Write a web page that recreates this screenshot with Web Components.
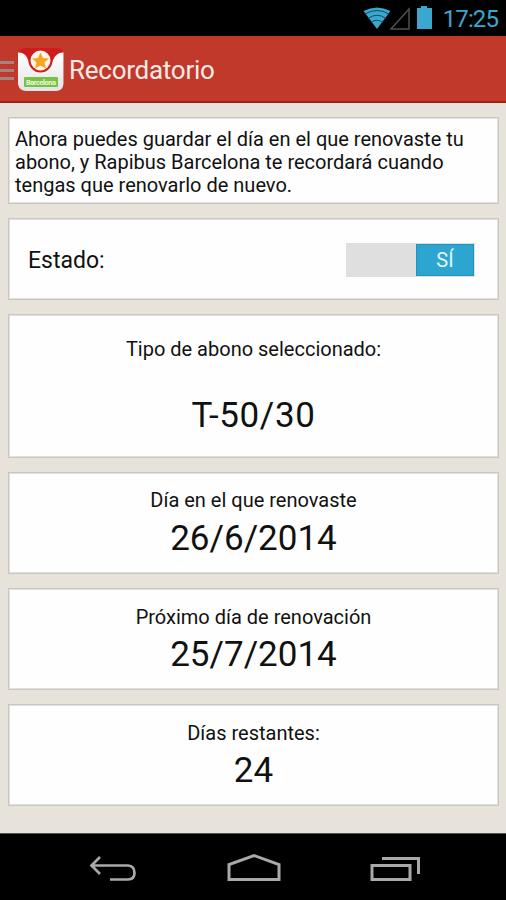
<!DOCTYPE html>
<html lang="es">
<head>
<meta charset="UTF-8">
<meta name="viewport" content="width=device-width, initial-scale=1.0">
<title>Recordatorio</title>
<style>
  body {
    margin: 0;
    height: 900px;
    overflow: hidden;
    display: flex;
    flex-direction: column;
    background: #e7e3da;
    color: #111;
    font-family: Roboto, "Liberation Sans", sans-serif;
  }

  main {
    flex: 1;
    display: flex;
    flex-direction: column;
    gap: 14px;
    padding: 14px 7px 0 8px;
  }
</style>
</head>
<body>
  <status-bar>17:25</status-bar>
  <action-bar>Recordatorio</action-bar>
  <main>
    <info-card style="height: 87px">
      <card-note>Ahora puedes guardar el día en el que renovaste tu abono, y Rapibus Barcelona te recordará cuando tengas que renovarlo de nuevo.</card-note>
    </info-card>
    <info-card style="height: 82px">
      <toggle-row label="Estado:">SÍ</toggle-row>
    </info-card>
    <info-card style="height: 144px">
      <data-field label="Tipo de abono seleccionado:" style="--top: 21px; --gap: 31px; --spacing: 0.6px">T-50/30</data-field>
    </info-card>
    <info-card style="height: 102px">
      <data-field label="Día en el que renovaste" style="--top: 14px; --gap: 3px">26/6/2014</data-field>
    </info-card>
    <info-card style="height: 102px">
      <data-field label="Próximo día de renovación">25/7/2014</data-field>
    </info-card>
    <info-card style="height: 102px">
      <data-field label="Días restantes:">24</data-field>
    </info-card>
  </main>
  <nav-bar></nav-bar>

<script>
class StatusBar extends HTMLElement {
  connectedCallback() {
    this.attachShadow({ mode: 'open' });
    this.shadowRoot.innerHTML = `
      <style>
        :host {
          display: flex;
          justify-content: flex-end;
          height: 36px;
          padding-right: 8px;
          box-sizing: border-box;
          background: #000;
          color: #3aa7cf;
          font-size: 24px;
          letter-spacing: -0.9px;
          line-height: 38px;
        }

        svg {
          margin-right: 8px;
        }
      </style>
      <svg width="72" height="36" viewBox="0 0 72 36">
        <path d="M0.500 11Q14 4 27.500 11L14 29Z" fill="#3aa7cf"/>
        <path d="M2 14Q14 7 26 14M5 18.500Q14 12 23 18.500M8 22.500Q14 18 20 22.500" fill="none" stroke="#14485c" stroke-width="1"/>
        <path d="M46 9V29H28Z" fill="none" stroke="#505050" stroke-width="1.500"/>
        <path d="M58 8V6H64V8H69V29H54V8Z" fill="#3aa7cf"/>
      </svg>
      <slot></slot>
    `;
  }
}

class ActionBar extends HTMLElement {
  connectedCallback() {
    this.attachShadow({ mode: 'open' });
    this.shadowRoot.innerHTML = `
      <style>
        :host {
          display: flex;
          align-items: center;
          height: 67px;
          padding-top: 3px;
          box-sizing: border-box;
          border-bottom: 2px solid #a71c13;
          background: #c0392b;
          color: #fbe9e6;
          font-size: 26px;
          letter-spacing: -0.25px;
        }

        .drawer {
          display: grid;
          gap: 5px;
          width: 14px;
          margin-right: 4px;
        }

        .drawer i {
          height: 3px;
          background: #a5837f;
        }

        svg {
          margin-right: 5px;
        }
      </style>
      <div class="drawer"><i></i><i></i><i></i></div>
      <svg width="46" height="46" viewBox="0 0 46 46">
        <defs>
          <linearGradient id="paper" x2="0" y2="1">
            <stop offset="0" stop-color="#fff"/>
            <stop offset="1" stop-color="#e3e3e3"/>
          </linearGradient>
        </defs>
        <rect y="1" width="46" height="43" rx="7" fill="#cf1c1c"/>
        <path d="M0 5.500Q8 5 10.500 14A12.500 12.500 0 0 0 34.500 14Q38 5 45.500 5.500V37Q45 44 38 44H8Q1 44 0 37Z" fill="url(#paper)"/>
        <circle cx="22.500" cy="13.500" r="11" fill="#fff4e9" stroke="#cf1c1c" stroke-width="2"/>
        <path d="M22.500 5.500L25 11L31 11.500L26.500 15.500L28 21.500L22.500 18.500L17 21.500L18.500 15.500L14 11.500L20 11Z" fill="#f8a51f"/>
        <rect x="6" y="30" width="34" height="10" rx="1" fill="#79c142"/>
        <text x="23" y="38" text-anchor="middle" textLength="30" font-size="7.500" font-weight="700" letter-spacing="0" fill="#e9f8de">Barcelona</text>
      </svg>
      <slot></slot>
    `;
  }
}

class InfoCard extends HTMLElement {
  connectedCallback() {
    this.attachShadow({ mode: 'open' });
    this.shadowRoot.innerHTML = `
      <style>
        :host {
          display: block;
          padding: 1px;
          box-sizing: border-box;
          border: 1px solid #c9c7c3;
          background: #fefefe;
          box-shadow: inset 0 0 0 1px #e2e1df;
        }
      </style>
      <slot></slot>
    `;
  }
}

class CardNote extends HTMLElement {
  connectedCallback() {
    this.attachShadow({ mode: 'open' });
    this.shadowRoot.innerHTML = `
      <style>
        :host {
          display: block;
          padding: 9px 20px 0 5px;
          font-size: 20px;
          line-height: 23px;
        }
      </style>
      <slot></slot>
    `;
  }
}

class ToggleRow extends HTMLElement {
  connectedCallback() {
    this.attachShadow({ mode: 'open' });
    this.shadowRoot.innerHTML = `
      <style>
        :host {
          display: flex;
          align-items: center;
          justify-content: space-between;
          height: 100%;
          padding: 2px 22px 0 18px;
          box-sizing: border-box;
          font-size: 23px;
        }

        .track {
          display: flex;
          justify-content: flex-end;
          width: 129px;
          height: 34px;
          padding: 1px;
          box-sizing: border-box;
          background: #dfdfdf;
        }

        .thumb {
          width: 58px;
          box-sizing: border-box;
          border: 1px solid #2492bb;
          background: #2ca6d1;
          color: #e5f6fc;
          font-size: 20px;
          line-height: 31px;
          text-align: center;
        }
      </style>
      <span>${this.getAttribute('label')}</span>
      <div class="track"><div class="thumb"><slot></slot></div></div>
    `;
  }
}

class DataField extends HTMLElement {
  connectedCallback() {
    this.attachShadow({ mode: 'open' });
    this.shadowRoot.innerHTML = `
      <style>
        :host {
          display: flex;
          flex-direction: column;
          align-items: center;
          gap: var(--gap, 2px);
          padding-top: var(--top, 15px);
        }

        .label {
          font-size: 20px;
          line-height: 24px;
        }

        .value {
          font-size: 35px;
          letter-spacing: var(--spacing, 0);
          line-height: 48px;
        }
      </style>
      <span class="label">${this.getAttribute('label')}</span>
      <span class="value"><slot></slot></span>
    `;
  }
}

class NavBar extends HTMLElement {
  connectedCallback() {
    this.attachShadow({ mode: 'open' });
    this.shadowRoot.innerHTML = `
      <style>
        :host {
          display: flex;
          align-items: flex-start;
          justify-content: space-between;
          height: 67px;
          padding: 19px 86px 0 88px;
          box-sizing: border-box;
          border-top: 1px solid #55534f;
          background: #000;
        }

        svg {
          fill: none;
          stroke: #a9a9a9;
          stroke-width: 3;
        }
      </style>
      <svg width="50" height="32" viewBox="0 0 50 32"><path d="M12 4L3.500 12.500L12 21M4 12.500H40Q46.500 13 46.500 20Q46.500 26.500 40 26.500H22" stroke-width="2.700"/></svg>
      <svg width="54" height="32" viewBox="0 0 54 32"><path d="M2 26.500V11.500L27 2.500L52 11.500V26.500Z"/></svg>
      <svg width="50" height="32" viewBox="0 0 50 32"><path d="M2 12.500H40V26.500H2ZM12 5.500H48.500V21"/></svg>
    `;
  }
}

customElements.define('status-bar', StatusBar);
customElements.define('action-bar', ActionBar);
customElements.define('info-card', InfoCard);
customElements.define('card-note', CardNote);
customElements.define('toggle-row', ToggleRow);
customElements.define('data-field', DataField);
customElements.define('nav-bar', NavBar);
</script>
</body>
</html>
